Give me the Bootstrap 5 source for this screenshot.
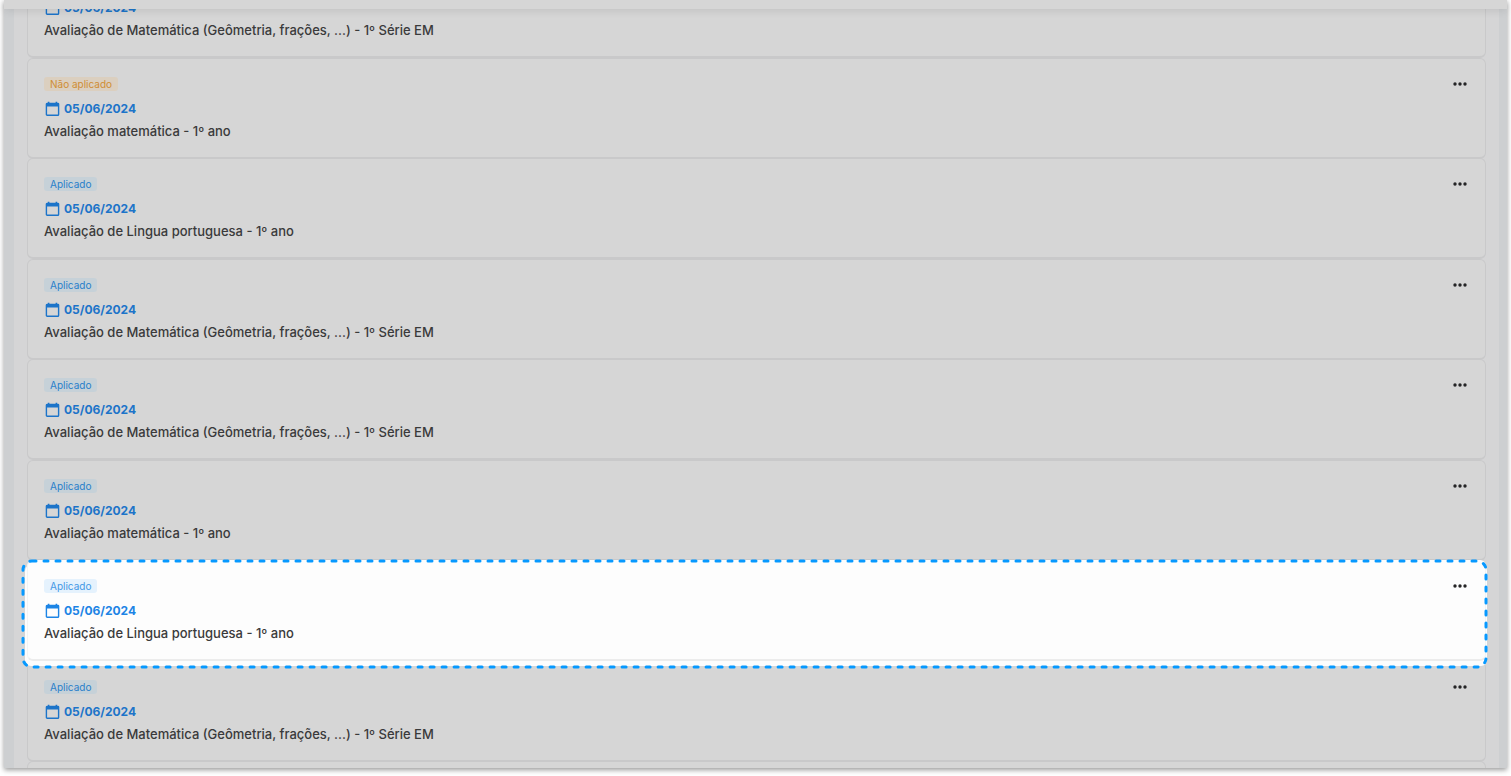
<!DOCTYPE html>
<html lang="pt-BR">
<head>
<meta charset="utf-8">
<meta name="viewport" content="width=device-width, initial-scale=1">
<title>Avaliações</title>
<link href="https://cdn.jsdelivr.net/npm/bootstrap@5.3.0/dist/css/bootstrap.min.css" rel="stylesheet">
<style>
  body { font-family: Inter, Roboto, sans-serif; background: #fff; color: #3a3a3b; }
  .shell { height: 100vh; padding: 0 4px 8px; }
  .window { background: #cdcfd1; box-shadow: 0 2px 5px rgba(0,0,0,.4); }
  .topbar { height: 9px; background: #d6d6d6; box-shadow: 0 1px 10px rgba(0,0,0,.12); z-index: 3; }
  .panel { margin: 0 8px 0 10px; padding: 0 13px; background: #d5d5d6; }
  .exam-list { margin-top: -52px; }
  .exam { height: 101px; margin-bottom: -1px; padding: 18px 16px 0; background: #d6d6d6; border: 1px solid #c9c9ca; border-bottom-width: 2px; border-radius: 6px; }
  .exam:nth-child(odd) { margin-bottom: 0; }
  .status { height: 14px; line-height: 14px; padding: 0 6px; border-radius: 3px; font-size: 10px; font-weight: 400; background: #c6d1d8; color: #287fca; }
  .status.pending { background: #dbcfbf; color: #cf8d34; }
  .exam-date { height: 20px; margin-top: 8px; padding-left: 1px; gap: 4px; font-size: 12px; line-height: 20px; font-weight: 700; color: #1c74c9; }
  .exam-title { margin: 2px 0 0; font-size: 13px; line-height: 20px; font-weight: 500; white-space: nowrap; }
  .more { width: 18px; height: 14px; color: #252526; line-height: 0; }
  .exam.current { z-index: 2; background: #fdfdfd; border-color: #fdfdfd #f3f3f3 #ececec; box-shadow: -2px 5px 0 #fdfdfd, 1px 5px 0 #fdfdfd; }
  .current .status { background: #e5f2fd; color: #4398e5; }
  .current .exam-date { color: #1c84e5; }
  .focus-frame { position: absolute; left: -5px; top: 0; width: calc(100% + 6px); height: calc(100% + 8px); overflow: visible; pointer-events: none; }
</style>
</head>
<body>
<svg class="d-none" aria-hidden="true">
  <symbol id="calendar" viewBox="0 0 15 16"><path d="M2 2.500h11a.6.6 0 0 1 .6.6V13.500a.8.8 0 0 1-.8.8H2.200a.8.8 0 0 1-.8-.8V3.100a.6.6 0 0 1 .6-.6z" fill="none" stroke="currentColor" stroke-width="1.400"/><path d="M1 2.200h13v3.300H1zM2.800.8h1.600v2H2.800zM10.600.8h1.600v2h-1.600z" fill="currentColor"/></symbol>
  <symbol id="dots" viewBox="0 0 14 4"><circle cx="2" cy="2" r="1.700"/><circle cx="7" cy="2" r="1.700"/><circle cx="12" cy="2" r="1.700"/></symbol>
</svg>
<div class="shell">
  <div class="window h-100 d-flex flex-column">
    <header class="topbar position-relative flex-shrink-0"></header>
    <main class="panel flex-fill overflow-hidden">
      <div class="exam-list d-flex flex-column" id="exams"></div>
    </main>
  </div>
</div>
<script>
  const math = 'Avaliação de Matemática (Geômetria, frações, ...) - 1º Série EM';
  const year = 'Avaliação matemática - 1º ano';
  const lang = 'Avaliação de Lingua portuguesa - 1º ano';
  const exams = [
    { title: math, scrolled: true }, { title: year, pending: true }, { title: lang }, { title: math },
    { title: math }, { title: year }, { title: lang, current: true }, { title: math }
  ];
  document.getElementById('exams').innerHTML = exams.map(e => `
    <article class="exam position-relative flex-shrink-0 d-flex justify-content-between align-items-start${e.current ? ' current' : ''}">
      <div>
        <span class="status d-table${e.pending ? ' pending' : ''}${e.scrolled ? ' invisible' : ''}">${e.pending ? 'Não aplicado' : 'Aplicado'}</span>
        <div class="exam-date d-flex align-items-center"><svg width="15" height="16" aria-hidden="true"><use href="#calendar"/></svg><time datetime="2024-06-05">05/06/2024</time></div>
        <h2 class="exam-title">${e.title}</h2>
      </div>
      <button type="button" class="more border-0 bg-transparent p-0" aria-label="Mais opções"><svg width="14" height="4" fill="currentColor" aria-hidden="true"><use href="#dots"/></svg></button>
      ${e.current ? '<svg class="focus-frame" aria-hidden="true"><rect width="100%" height="100%" rx="9" fill="none" stroke="#0799ff" stroke-width="3" stroke-linecap="round" stroke-dasharray="4 8"/></svg>' : ''}
    </article>`).join('') + '<article class="exam flex-shrink-0"></article>';
</script>
<script src="https://cdn.jsdelivr.net/npm/bootstrap@5.3.0/dist/js/bootstrap.bundle.min.js"></script>
</body>
</html>
